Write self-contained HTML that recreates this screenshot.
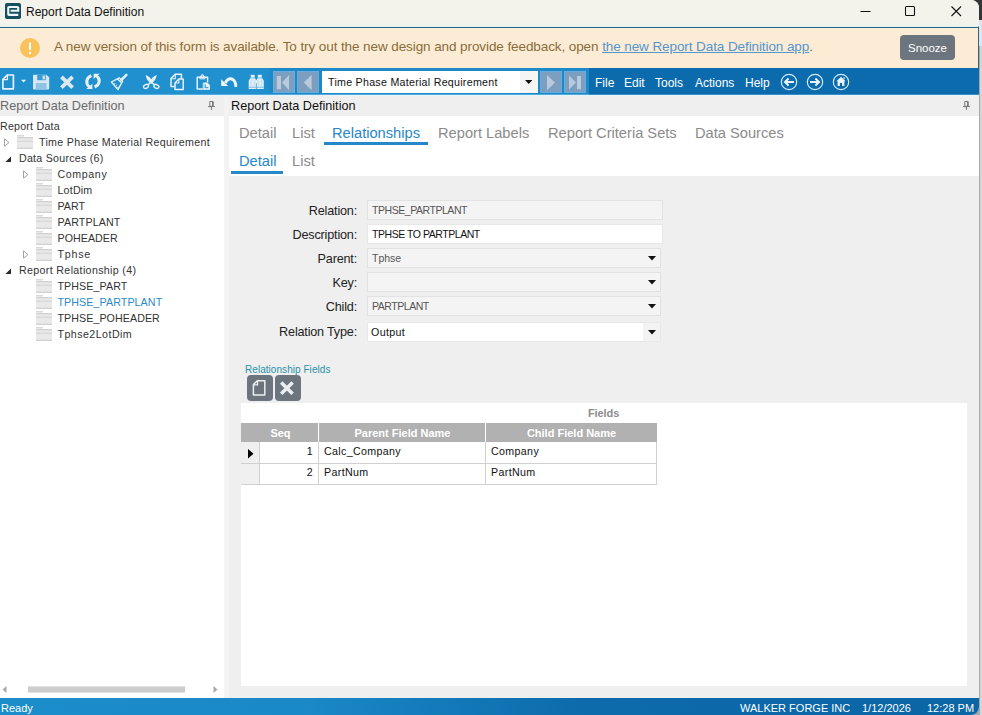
<!DOCTYPE html>
<html>
<head>
<meta charset="utf-8">
<title>Report Data Definition</title>
<style>
*{box-sizing:border-box;margin:0;padding:0}
html,body{width:982px;height:715px;overflow:hidden;background:#c9c9c9;font-family:"Liberation Sans",sans-serif;}
.a{position:absolute;white-space:nowrap}
#deskTop{left:970px;top:0;width:12px;height:20px;background:#333639}
#deskMid{left:970px;top:20px;width:12px;height:26px;background:#dfe3ec}
#deskLow{left:970px;top:46px;width:12px;height:669px;background:linear-gradient(90deg,#a9a9a9 0,#a9a9a9 10px,#d5d5d5 10px,#d5d5d5 12px)}
#win{left:0;top:0;width:979px;height:715px;background:#efefef;border-radius:0 8px 8px 0;overflow:hidden}
#title{left:0;top:0;width:979px;height:27px;background:#f3f3eb}
#title .t{left:26px;top:5px;font-size:12px;color:#111;line-height:14px}
#banner{left:0;top:26px;width:979px;height:42px;background:#fcecd5;border-top:1px solid #dcf3f8;border-right:1px solid #2a6880}
#banner:before{content:"";position:absolute;left:0;top:0;width:100%;height:1px;background:#2a6880}
#banner .msg{left:54px;top:12px;font-size:13.5px;color:#8a6d3b;letter-spacing:-0.09px}
#banner .msg span{color:#5596cf;text-decoration:underline}
#warn{left:20px;top:10.500px;width:20px;height:20px;border-radius:50%;background:#f9c25c}
#snooze{left:900px;top:8px;width:55px;height:25px;border-radius:4px;background:#6c757d;color:#fff;font-size:11.5px;text-align:center;line-height:26px}
#tb{left:0;top:68px;width:979px;height:27px;background:#0b6bad;border-bottom:1px solid #3d8cc0}
#tbL{left:0;top:0;width:589px;height:27px;background:linear-gradient(90deg,#2090cf 0,#2090cf 268px,#1d89c8 270px,#1d89c8 100%);border-bottom:1px solid #55aadb}
.nav{top:3px;width:22px;height:22px;background:#7c9ebf;border:1px solid #62aee0}
#combo{left:322px;top:3px;width:216px;height:22px;background:#fff}
#combo .t{left:6px;top:4px;font-size:10.67px;letter-spacing:0.27px;color:#111;line-height:14px}
#combo .btn{left:198px;top:0;width:18px;height:22px;background:#f5f5f5}
.menu{top:7px;font-size:12px;color:#fff;line-height:16px}
.ph{top:96px;height:20px;background:#efefef;font-size:12.67px;line-height:20px}
#tree{left:0;top:116px;width:224px;height:582px;background:#fff}
.tn{font-size:10.67px;color:#333;letter-spacing:0.3px;line-height:14px;height:14px}
.tn.sel{color:#2a8acb}
#main{left:231px;top:116px;width:748px;height:582px;background:#efefef}
#tabs{left:-2px;top:0;width:750px;height:60px;background:#fff}
.tab{font-size:14.67px;color:#8b8b8b;line-height:18px}
.tab.on{color:#2687c9}
.ul{height:3px;background:#2687c9}
.lbl{font-size:12.67px;color:#222;text-align:right;width:130px;letter-spacing:-0.2px;line-height:14px}
.inp{height:20px;font-size:10.5px;letter-spacing:-0.45px;color:#555;line-height:18px;padding-left:4px;border:1px solid #e2e2e2;background:#f4f4f4}
.inp.w{background:#fff;color:#111;border-color:#e8e8e8}
#grid{left:10px;top:287px;width:726px;height:283px;background:#fff}
.gbtn{width:26px;height:26px;border-radius:4px;background:#6c757d}
.gh{height:19px;background:#b1b1b1;color:#fff;font-size:11px;font-weight:bold;text-align:center;line-height:21px}
.gc{background:#fff;font-size:10.67px;letter-spacing:0.35px;color:#111;line-height:19px;padding-left:5px}
.gc.r{text-align:right;padding-right:5px;padding-left:0}
#status{left:0;top:698px;width:979px;height:17px;background:linear-gradient(90deg,#1b8dca 0%,#1a8ac6 30%,#0d6aab 60%,#0b66a6 100%);color:#fff;font-size:11px;line-height:13px}
</style>
</head>
<body>
<div class="a" id="deskTop"></div><div class="a" id="deskMid"></div><div class="a" id="deskLow"></div>
<div class="a" id="win">
  <div class="a" id="title">
    <svg class="a" style="left:5px;top:3px" width="16" height="16" viewBox="0 0 16 16"><rect x="0" y="0" width="16" height="16" rx="1.800" fill="#14505f"/><path d="M5.600 7.800H13.200V4.800Q13.200 4 12.400 4H4.050Q3.250 4 3.250 4.800V11.100Q3.250 11.900 4.050 11.900H13.300" fill="none" stroke="#eef8fb" stroke-width="2.100"/></svg>
    <div class="a t">Report Data Definition</div>
    <svg class="a" style="left:858px;top:5px" width="110" height="14" viewBox="0 0 110 14"><path d="M2.500 6.500h10" stroke="#111" stroke-width="1.100" fill="none"/><rect x="47.500" y="1.500" width="9" height="9" rx="1" stroke="#111" stroke-width="1.100" fill="none"/><path d="M93.500 1.500l9.500 9.500M103 1.500l-9.500 9.500" stroke="#111" stroke-width="1.100" fill="none"/></svg>
  </div>
  <div class="a" id="banner">
    <div class="a" id="warn"><svg width="20" height="20" viewBox="0 0 20 20" style="display:block"><rect x="9" y="4.200" width="2" height="8" rx="1" fill="#fff"/><circle cx="10" cy="15" r="1.200" fill="#fff"/></svg></div>
    <div class="a msg">A new version of this form is available. To try out the new design and provide feedback, open <span>the new Report Data Definition app</span>.</div>
    <div class="a" id="snooze">Snooze</div>
  </div>
  <div class="a" id="tb">
    <div class="a" id="tbL"></div>
    <!--ICONS-->
    <div class="a nav" style="left:273px"></div>
    <div class="a nav" style="left:297px"></div>
    <div class="a" id="combo"><div class="a t">Time Phase Material Requirement</div><div class="a btn"><svg class="a" style="left:5px;top:9px" width="8" height="5"><path d="M0 0h7.400l-3.700 4z" fill="#111"/></svg></div></div>
    <div class="a nav" style="left:540px"></div>
    <div class="a nav" style="left:564px"></div>
    <div class="a menu" style="left:595px">File</div>
    <div class="a menu" style="left:624px">Edit</div>
    <div class="a menu" style="left:655px">Tools</div>
    <div class="a menu" style="left:695px">Actions</div>
    <div class="a menu" style="left:745px">Help</div>
<!--ICONS_START-->
<svg class="a" style="left:0;top:0" width="979" height="27" viewBox="0 0 979 27">
<g fill="none" stroke="#e6f1f9" stroke-width="1.700" stroke-linejoin="round" stroke-linecap="round">
<!-- new -->
<path d="M7.200 7H13.400V20.800H2.900V11.400Z"/><path d="M7.400 7.200V11.600H3.100" stroke-width="1.300"/>
<!-- copy -->
<path d="M175.200 6.300H181.400V10.200M175.200 6.300L171 10.600V18.500H174.200" stroke-width="1.500"/><path d="M175.300 6.500V10.700H171.200" stroke-width="1.100"/>
<path d="M178.800 11H183.200V21.500H175V14.900Z" stroke-width="1.500"/><path d="M178.900 11.200V15H175.200" stroke-width="1.100"/>
<!-- paste -->
<path d="M199.600 9.200H197.200V20.900H202.400M205.200 9.200H207.600V13.800" stroke-width="1.500"/>
<path d="M199.800 10.600V8.600H200.900Q201.100 6.400 202.400 6.400Q203.700 6.400 203.900 8.600H205V10.600Z" fill="#e6f1f9" stroke-width="0.700"/>
<path d="M203.600 14.900H207.400L209.500 17V21.400H203.600Z" fill="#e6f1f9" stroke-width="0.800"/>
</g>
<path d="M205.200 16.400V19.700H208.300" fill="none" stroke="#1f8ecb" stroke-width="1"/><circle cx="202.400" cy="8" r="0.550" fill="#1f8ecb"/>
<!-- new dropdown -->
<path d="M21 11.800H26.200L23.600 14.500Z" fill="#eef6fb"/>
<!-- save -->
<path d="M33 7.800Q33 6.800 34 6.800H46.600L49.200 9.400V20.600Q49.200 21.600 48.200 21.600H34Q33 21.600 33 20.600Z" fill="#d3e7f4"/>
<rect x="37.200" y="6.800" width="8.600" height="5.400" fill="#3d9bd1"/><rect x="42.600" y="7.600" width="2.300" height="3.800" fill="#d3e7f4"/>
<rect x="35.800" y="15" width="10.800" height="6.600" fill="#8fc4e4"/>
<!-- delete X -->
<path d="M61.400 8.800L72.600 19.600M72.600 8.800L61.400 19.600" stroke="#dde8f2" stroke-width="3.800" fill="none"/>
<!-- refresh -->
<g><path d="M91.400 7.600C86.400 9.600 85 15.200 89.400 18.800" fill="none" stroke="#e6f1f9" stroke-width="3"/><path d="M86.200 20.900H92.400V15.700Z" fill="#e6f1f9"/></g>
<g transform="rotate(180 93 13.300)"><path d="M91.400 7.600C86.400 9.600 85 15.200 89.400 18.800" fill="none" stroke="#e6f1f9" stroke-width="3"/><path d="M86.200 20.900H92.400V15.700Z" fill="#e6f1f9"/></g>
<!-- broom -->
<g stroke="#e6f1f9" fill="none" stroke-linecap="round" stroke-linejoin="round">
<path d="M126.400 6.800L121.400 11.800" stroke-width="2.500"/>
<path d="M119.200 9.800L111.400 14L118 21.600L122.600 13.200Z" stroke-width="1.400"/>
<path d="M117.400 11L121.600 14.800" stroke-width="1.200"/>
<path d="M113.800 16.600L115 15.400M115.400 18.400L116.600 17.200M117 20.200L118.200 19" stroke-width="1"/>
</g>
<!-- scissors -->
<g fill="#e6f1f9"><path d="M145.700 7.100Q150.200 8.600 152.900 14.300L151.100 15.700Q146 11.800 145.700 7.100Z"/><path d="M156.700 7.100Q152.200 8.600 149.500 14.300L151.300 15.700Q156.400 11.800 156.700 7.100Z"/></g>
<g stroke="#e6f1f9" fill="none" stroke-width="1.400">
<path d="M150.400 14.600L148.200 16.800M152 14.600L154.200 16.800"/>
<ellipse cx="146" cy="18.400" rx="2.600" ry="1.800" transform="rotate(-25 146 18.400)"/>
<ellipse cx="156.400" cy="18.400" rx="2.600" ry="1.800" transform="rotate(25 156.400 18.400)"/>
</g>
<!-- undo -->
<path d="M235.700 18.800A5.400 7.100 0 0 0 225.400 15" fill="none" stroke="#eef6fb" stroke-width="3"/>
<path d="M221.200 11.300V18H228.100Z" fill="#eef6fb"/>
<!-- binoculars -->
<g fill="#e3eff8">
<rect x="250.700" y="6.800" width="4" height="2.900"/><rect x="257.800" y="6.800" width="4" height="2.900"/>
<path d="M250.200 10.300H255.200L255.900 12V21H248.700V12.800Z"/>
<path d="M257.300 10.300H262.300L263.800 12.800V21H256.600V12Z"/>
<rect x="255.500" y="12.200" width="1.500" height="3"/>
</g>
<path d="M248.700 19.300H255.900M256.600 19.300H263.800" stroke="#5aaedf" stroke-width="0.700"/>
<path d="M251 11.800V18.600M254.200 11.800V18.600M258.300 11.800V18.600M261.500 11.800V18.600" stroke="#a9d3ee" stroke-width="0.600"/>
<!-- nav icons -->
<g fill="#b8cadb">
<rect x="276.800" y="8" width="4.200" height="13.200"/><path d="M289 7L282 14.600L289 22.200Z"/>
<path d="M311.600 7L303.800 14.600L311.600 22.200Z"/>
<path d="M547 7L555 14.600L547 22.200Z"/>
<path d="M569 7.600L576 14.600L569 21.600Z"/><rect x="577" y="8" width="4" height="13.200"/>
</g>
<!-- round buttons -->
<g fill="none" stroke="#d4e9f8" stroke-width="1.200">
<circle cx="789" cy="14" r="7.700"/><circle cx="815" cy="14" r="7.700"/><circle cx="841" cy="14" r="7.700"/>
</g>
<g fill="none" stroke="#e8f3fb" stroke-width="2">
<path d="M794 14H786M788.600 10.600L785 14L788.600 17.400"/>
<path d="M810 14H818M815.400 10.600L819 14L815.400 17.400"/>
</g>
<path d="M841 8.800L836.400 13.200H837.600V18H844.400V13.200H845.600Z" fill="#e8f3fb"/>
<path d="M843.400 9.200H844.600V11.600L843.400 10.600Z" fill="#e8f3fb"/>
<rect x="839.900" y="15" width="2.200" height="3" fill="#0b6bad"/>
</svg>
<!--ICONS_END-->
  </div>
  <div class="a" style="left:0;top:95px;width:979px;height:1px;background:#e2f6fc"></div>
  <div class="a ph" style="left:0;width:224px;color:#6a6a6a">Report Data Definition</div>
  <div class="a ph" style="left:231px;width:748px;color:#111">Report Data Definition</div>
  <svg class="a" style="left:208px;top:101px" width="8" height="10" viewBox="0 0 8 10"><path d="M1.800 0.500H5V5.300H1.800Z" fill="none" stroke="#7a7a7a" stroke-width="1"/><path d="M4.800 0.500V5.300" stroke="#7a7a7a" stroke-width="1.500"/><path d="M0 5.600H6.900M3.400 5.600V9" stroke="#7a7a7a" stroke-width="1" fill="none"/></svg>
<svg class="a" style="left:963px;top:101px" width="8" height="10" viewBox="0 0 8 10"><path d="M1.800 0.500H5V5.300H1.800Z" fill="none" stroke="#7a7a7a" stroke-width="1"/><path d="M4.800 0.500V5.300" stroke="#7a7a7a" stroke-width="1.500"/><path d="M0 5.600H6.900M3.400 5.600V9" stroke="#7a7a7a" stroke-width="1" fill="none"/></svg>
<div class="a" id="tree">
<svg width="0" height="0" style="position:absolute"><defs><g id="fold"><path d="M0 0h7v2h9v12H0z" fill="#e9e9e9"/><rect x="0" y="0" width="7" height="1" fill="#d9d9d9"/><rect x="0" y="2" width="16" height="1.300" fill="#d2d2d2"/><rect x="0" y="5.600" width="16" height="1.300" fill="#d6d6d6"/><rect x="0" y="12.600" width="16" height="1.400" fill="#d2d2d2"/></g></defs></svg>
<div class="a tn" style="left:0px;top:3px;letter-spacing:0.22px">Report Data</div>
<svg class="a" style="left:4px;top:22px" width="7" height="9" viewBox="0 0 7 9"><path d="M0.500 0.800L5 4.500L0.500 8.200Z" fill="#fff" stroke="#a3a3a3" stroke-width="1"/></svg>
<svg class="a fold" style="left:17px;top:19px" width="16" height="14" viewBox="0 0 16 14"><use href="#fold"/></svg>
<div class="a tn" style="left:39px;top:19px;letter-spacing:0.31px">Time Phase Material Requirement</div>
<svg class="a" style="left:5px;top:40px" width="7" height="7" viewBox="0 0 7 7"><path d="M6 0.400V6H0.400Z" fill="#2a2a2a"/></svg>
<div class="a tn" style="left:19px;top:35px;letter-spacing:0.25px">Data Sources (6)</div>
<svg class="a" style="left:23px;top:54px" width="7" height="9" viewBox="0 0 7 9"><path d="M0.500 0.800L5 4.500L0.500 8.200Z" fill="#fff" stroke="#a3a3a3" stroke-width="1"/></svg>
<svg class="a fold" style="left:36px;top:51px" width="16" height="14" viewBox="0 0 16 14"><use href="#fold"/></svg>
<div class="a tn" style="left:57.5px;top:51px;letter-spacing:0.6px">Company</div>
<svg class="a fold" style="left:36px;top:67px" width="16" height="14" viewBox="0 0 16 14"><use href="#fold"/></svg>
<div class="a tn" style="left:57.5px;top:67px;letter-spacing:0.19px">LotDim</div>
<svg class="a fold" style="left:36px;top:83px" width="16" height="14" viewBox="0 0 16 14"><use href="#fold"/></svg>
<div class="a tn" style="left:57.5px;top:83px;letter-spacing:0px">PART</div>
<svg class="a fold" style="left:36px;top:99px" width="16" height="14" viewBox="0 0 16 14"><use href="#fold"/></svg>
<div class="a tn" style="left:57.5px;top:99px;letter-spacing:0.13px">PARTPLANT</div>
<svg class="a fold" style="left:36px;top:115px" width="16" height="14" viewBox="0 0 16 14"><use href="#fold"/></svg>
<div class="a tn" style="left:57.5px;top:115px;letter-spacing:0.06px">POHEADER</div>
<svg class="a" style="left:23px;top:134px" width="7" height="9" viewBox="0 0 7 9"><path d="M0.500 0.800L5 4.500L0.500 8.200Z" fill="#fff" stroke="#a3a3a3" stroke-width="1"/></svg>
<svg class="a fold" style="left:36px;top:131px" width="16" height="14" viewBox="0 0 16 14"><use href="#fold"/></svg>
<div class="a tn" style="left:57.5px;top:131px;letter-spacing:0.79px">Tphse</div>
<svg class="a" style="left:5px;top:152px" width="7" height="7" viewBox="0 0 7 7"><path d="M6 0.400V6H0.400Z" fill="#2a2a2a"/></svg>
<div class="a tn" style="left:19px;top:147px;letter-spacing:0.34px">Report Relationship (4)</div>
<svg class="a fold" style="left:36px;top:163px" width="16" height="14" viewBox="0 0 16 14"><use href="#fold"/></svg>
<div class="a tn" style="left:57.5px;top:163px;letter-spacing:0.1px">TPHSE_PART</div>
<svg class="a fold" style="left:36px;top:179px" width="16" height="14" viewBox="0 0 16 14"><use href="#fold"/></svg>
<div class="a tn sel" style="left:57.5px;top:179px;letter-spacing:0.1px">TPHSE_PARTPLANT</div>
<svg class="a fold" style="left:36px;top:195px" width="16" height="14" viewBox="0 0 16 14"><use href="#fold"/></svg>
<div class="a tn" style="left:57.5px;top:195px;letter-spacing:0.08px">TPHSE_POHEADER</div>
<svg class="a fold" style="left:36px;top:211px" width="16" height="14" viewBox="0 0 16 14"><use href="#fold"/></svg>
<div class="a tn" style="left:57.5px;top:211px;letter-spacing:0.45px">Tphse2LotDim</div>
<svg class="a" style="left:0;top:567px" width="223" height="12" viewBox="0 0 223 12"><path d="M2.500 6.500L6.500 3V10Z" fill="#a9a9a9"/><path d="M217.500 6.500L213.500 3V10Z" fill="#a9a9a9"/><rect x="28" y="3.400" width="157" height="6.200" fill="#cdcdcd"/></svg>
</div>
  <div class="a" style="left:224px;top:96px;width:5px;height:602px;background:#f3f3f3"></div>
  <div class="a" id="main">
    <div class="a" id="tabs">
<div class="a tab" style="left:10px;top:8px">Detail</div>
<div class="a tab" style="left:63px;top:8px">List</div>
<div class="a tab on" style="left:103px;top:8px">Relationships</div>
<div class="a tab" style="left:209px;top:8px">Report Labels</div>
<div class="a tab" style="left:319px;top:8px">Report Criteria Sets</div>
<div class="a tab" style="left:466px;top:8px">Data Sources</div>
<div class="a ul" style="left:95px;top:26px;width:104px"></div>
<div class="a tab on" style="left:10px;top:36px">Detail</div>
<div class="a tab" style="left:63px;top:36px">List</div>
<div class="a ul" style="left:2px;top:55px;width:52px"></div>
</div>
<div class="a lbl" style="left:-4px;top:88px">Relation:</div>
<div class="a inp" style="left:136px;top:84px;width:296px">TPHSE_PARTPLANT</div>
<div class="a lbl" style="left:-4px;top:112px">Description:</div>
<div class="a inp w" style="left:136px;top:108px;width:296px">TPHSE TO PARTPLANT</div>
<div class="a lbl" style="left:-4px;top:136px">Parent:</div>
<div class="a inp" style="left:136px;top:132px;width:294px"><span style="letter-spacing:0">Tphse</span></div>
<svg class="a dd" style="left:416.700px;top:140px" width="8" height="5" viewBox="0 0 8 5"><path d="M0 0h8L4 4.500z" fill="#111"/></svg>
<div class="a lbl" style="left:-4px;top:160px">Key:</div>
<div class="a inp" style="left:136px;top:156px;width:294px"></div>
<svg class="a dd" style="left:416.700px;top:164px" width="8" height="5" viewBox="0 0 8 5"><path d="M0 0h8L4 4.500z" fill="#111"/></svg>
<div class="a lbl" style="left:-4px;top:184px">Child:</div>
<div class="a inp" style="left:136px;top:180px;width:294px">PARTPLANT</div>
<svg class="a dd" style="left:416.700px;top:188px" width="8" height="5" viewBox="0 0 8 5"><path d="M0 0h8L4 4.500z" fill="#111"/></svg>
<div class="a lbl" style="left:-4px;top:209px">Relation Type:</div>
<div class="a inp w" style="left:136px;top:206px;width:294px"><span style="font-size:10.67px;letter-spacing:0.35px;margin-left:-1px">Output</span><div class="a" style="left:275px;top:0;width:17px;height:18px;background:#f3f3f3"></div></div>
<svg class="a dd" style="left:416.700px;top:214px" width="8" height="5" viewBox="0 0 8 5"><path d="M0 0h8L4 4.500z" fill="#111"/></svg>
<div class="a" style="left:14px;top:248px;font-size:10px;letter-spacing:0.05px;color:#2a8fa8">Relationship Fields</div>
<div class="a gbtn" style="left:16px;top:259px"><svg width="26" height="26" viewBox="0 0 26 26"><path d="M10.300 5.800H17.800V20H6.400V9.600Z" fill="none" stroke="#eceff1" stroke-width="1.500" stroke-linejoin="round"/><path d="M10.500 6V9.900H6.600" fill="none" stroke="#eceff1" stroke-width="1.300"/></svg></div>
<div class="a gbtn" style="left:44px;top:259px"><svg width="26" height="26" viewBox="0 0 26 26"><path d="M6.200 7.400L17.600 18.800M17.600 7.400L6.200 18.800" stroke="#eceff1" stroke-width="3.500" fill="none"/></svg></div>
<div class="a" id="grid">
<div class="a" style="left:347px;top:4px;font-size:11px;font-weight:bold;color:#8c8c8c;letter-spacing:-0.1px">Fields</div>
<div class="a gh" style="left:0;top:20px;width:77px;padding-left:2px">Seq</div>
<div class="a gh" style="left:78px;top:20px;width:166px;padding-left:1px">Parent Field Name</div>
<div class="a gh" style="left:245px;top:20px;width:171px;padding-left:0">Child Field Name</div>
<div class="a" style="left:0;top:39px;width:416px;height:43px;background:#d0d0d0"></div>
<div class="a gc" style="left:0;top:39px;width:18px;height:21px;background:#f0f0f0"><svg class="a" style="left:7px;top:7px" width="6" height="10" viewBox="0 0 6 10"><path d="M0 0L5.500 4.800L0 9.600z" fill="#000"/></svg></div>
<div class="a gc r" style="left:19px;top:39px;width:58px;height:21px">1</div>
<div class="a gc" style="left:78px;top:39px;width:166px;height:21px">Calc_Company</div>
<div class="a gc" style="left:245px;top:39px;width:170px;height:21px">Company</div>
<div class="a gc" style="left:0;top:61px;width:18px;height:20px;background:#f0f0f0"></div>
<div class="a gc r" style="left:19px;top:61px;width:58px;height:20px;line-height:17px">2</div>
<div class="a gc" style="left:78px;top:61px;width:166px;height:20px;line-height:17px">PartNum</div>
<div class="a gc" style="left:245px;top:61px;width:170px;height:20px;line-height:17px">PartNum</div>
</div>
  </div>
  <div class="a" id="status">
    <div class="a" style="left:1px;top:4px">Ready</div>
    <div class="a" style="left:740px;top:4px">WALKER FORGE INC</div>
    <div class="a" style="left:862px;top:4px">1/12/2026</div>
    <div class="a" style="left:927px;top:4px">12:28 PM</div>
  </div>
</div>
</body>
</html>
